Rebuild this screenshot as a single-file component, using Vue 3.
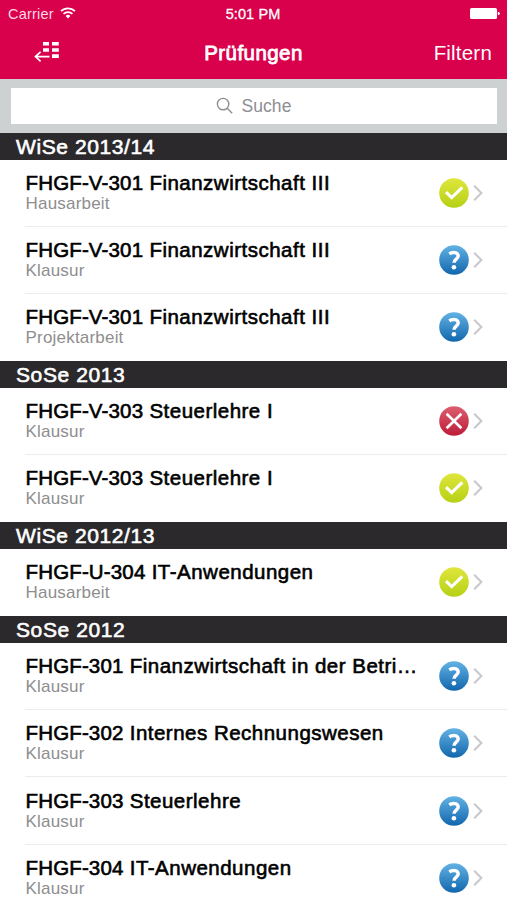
<template>
    <div class="screen">
        <header class="navbar">
            <div class="status">
                <div class="carrier">
                    <span>Carrier</span>
                    <svg class="wifi" viewBox="0 0 16 12" width="16" height="12">
                        <path d="M1 4.2a10 10 0 0 1 14 0" />
                        <path d="M3.5 6.9a6.4 6.4 0 0 1 9 0" />
                        <path class="dot" d="M5.6 9a3.5 3.5 0 0 1 4.8 0L8 11.6z" />
                    </svg>
                </div>
                <span class="time">5:01 PM</span>
                <svg class="battery" viewBox="0 0 30 12" width="30" height="12">
                    <rect x="0" y="0" width="27" height="11" rx="1.6" />
                    <path d="M27.8 3.7q2 .3 2 1.8t-2 1.8z" />
                </svg>
            </div>
            <div class="bar">
                <svg class="menu" viewBox="0 0 26 22" width="26" height="22">
                    <path class="blocks" d="M9 1h6v3.6H9zM18 1h6.8v3.6H18zM9 7.2h6v3.6H9zM18 7.2h6.8v3.6H18zM18 13.2h6.8V17H18z" />
                    <path class="arrow" d="M15.5 15.6H1.5M6.6 10.8L1.4 15.6L6.6 20.4" />
                </svg>
                <h1>Prüfungen</h1>
                <span class="filter">Filtern</span>
            </div>
        </header>

        <div class="search">
            <div class="field">
                <svg viewBox="0 0 18 18" width="18" height="18">
                    <circle cx="7.1" cy="7.1" r="5.7" />
                    <path d="M11.2 11.2L16.2 16.2" />
                </svg>
                <span>Suche</span>
            </div>
        </div>

        <section v-for="group in groups" :key="group.term">
            <h2>{{ group.term }}</h2>
            <ul>
                <li v-for="(exam, i) in group.exams" :key="i">
                    <div class="text">
                        <div class="title"><span class="code">{{ exam.code }}</span> {{ exam.name }}</div>
                        <div class="type">{{ exam.type }}</div>
                    </div>
                    <svg class="state" :class="exam.state" viewBox="0 0 32 32" width="32" height="32">
                        <defs>
                            <linearGradient :id="'fill-' + group.id + i" x1="0" y1="0" x2="0" y2="1">
                                <stop class="from" offset="0" />
                                <stop class="to" offset="1" />
                            </linearGradient>
                        </defs>
                        <circle cx="16" cy="16" r="14.8" :fill="`url(#fill-${group.id}${i})`" />
                        <path v-if="exam.state == 'passed'" class="sign check" d="M8 15.2L13.7 20.6L24.3 10.4" />
                        <path v-else-if="exam.state == 'failed'" class="sign cross" d="M8.6 8.8L23.4 23.2M23.4 8.8L8.6 23.2" />
                        <g v-else>
                            <path class="sign question" d="M11.3 9.8C14.2 7.7 20.2 7.9 20.2 12C20.2 15.2 16 15.2 16 18.8" />
                            <circle class="point" cx="15.9" cy="23.2" r="2.3" />
                        </g>
                    </svg>
                    <svg class="chevron" viewBox="0 0 10 18" width="10" height="18">
                        <path d="M1.2 1.8L8.4 9L1.2 16.2" />
                    </svg>
                </li>
            </ul>
        </section>
    </div>
</template>

<script setup>
const groups = [
    {
        id: 'w13',
        term: 'WiSe 2013/14',
        exams: [
            { code: 'FHGF-V-301', name: 'Finanzwirtschaft III', type: 'Hausarbeit', state: 'passed' },
            { code: 'FHGF-V-301', name: 'Finanzwirtschaft III', type: 'Klausur', state: 'open' },
            { code: 'FHGF-V-301', name: 'Finanzwirtschaft III', type: 'Projektarbeit', state: 'open' },
        ],
    },
    {
        id: 's13',
        term: 'SoSe 2013',
        exams: [
            { code: 'FHGF-V-303', name: 'Steuerlehre I', type: 'Klausur', state: 'failed' },
            { code: 'FHGF-V-303', name: 'Steuerlehre I', type: 'Klausur', state: 'passed' },
        ],
    },
    {
        id: 'w12',
        term: 'WiSe 2012/13',
        exams: [
            { code: 'FHGF-U-304', name: 'IT-Anwendungen', type: 'Hausarbeit', state: 'passed' },
        ],
    },
    {
        id: 's12',
        term: 'SoSe 2012',
        exams: [
            { code: 'FHGF-301', name: 'Finanzwirtschaft in der Betri…', type: 'Klausur', state: 'open' },
            { code: 'FHGF-302', name: 'Internes Rechnungswesen', type: 'Klausur', state: 'open' },
            { code: 'FHGF-303', name: 'Steuerlehre', type: 'Klausur', state: 'open' },
            { code: 'FHGF-304', name: 'IT-Anwendungen', type: 'Klausur', state: 'open' },
        ],
    },
]
</script>

<style scoped>
.screen {
    width: 507px;
    height: 900px;
    overflow: hidden;
    background: #fff;
    font-family: "Liberation Sans", Arial, sans-serif;
}

.navbar {
    height: 79px;
    background: #d9004c;
    color: #fff;
}

.status {
    display: grid;
    grid-template-columns: 1fr auto 1fr;
    align-items: center;
    height: 27px;
    padding: 0 7px 0 8px;
    font-size: 14.5px;
    line-height: 28px;
}

.carrier {
    display: flex;
    align-items: center;
    gap: 6px;
    color: #ffd9e6;
    letter-spacing: 0.2px;
}

.wifi {
    margin-top: -2px;
    fill: none;
    stroke: #fff;
    stroke-width: 1.7;
}

.wifi .dot {
    fill: #fff;
    stroke: none;
}

.time {
    padding-right: 2px;
    letter-spacing: 0.1px;
    -webkit-text-stroke: 0.3px #fff;
}

.battery {
    justify-self: end;
    fill: #fff;
}

.bar {
    display: grid;
    grid-template-columns: 1fr auto 1fr;
    align-items: center;
    height: 52px;
    padding: 0 15px 0 34px;
}

.bar h1 {
    margin: 0 19px 0 0;
    font-size: 20.5px;
    font-weight: 400;
    line-height: 50px;
    letter-spacing: 0.45px;
    -webkit-text-stroke: 0.8px #fff;
}

.menu {
    margin-top: -3px;
}

.blocks {
    fill: #fff;
}

.arrow {
    fill: none;
    stroke: #fff;
    stroke-width: 1.6;
}

.filter {
    justify-self: end;
    font-size: 20.5px;
    line-height: 50px;
    letter-spacing: 0.2px;
}

.search {
    box-sizing: border-box;
    height: 53.8px;
    padding: 9px 10px 0 11px;
    background: #cdd1d2;
}

.field {
    display: flex;
    align-items: center;
    justify-content: center;
    gap: 8px;
    height: 36px;
    padding-right: 1px;
    background: #fff;
    color: #8e8e93;
    font-size: 17.5px;
    letter-spacing: 0.05px;
}

.field svg {
    fill: none;
    stroke: #8e8e93;
    stroke-width: 1.4;
}

h2 {
    height: 26.8px;
    margin: 0;
    padding-left: 16px;
    background: #2b292c;
    color: #fff;
    font-size: 21px;
    font-weight: 400;
    line-height: 28px;
    letter-spacing: 0.6px;
    -webkit-text-stroke: 0.6px #fff;
}

ul {
    margin: 0;
    padding: 0;
    list-style: none;
}

li {
    display: flex;
    align-items: center;
    box-sizing: border-box;
    height: 67.2px;
    margin-left: 25px;
    padding-right: 24px;
    border-bottom: 1.5px solid #ececec;
}

li:last-child {
    border-bottom-color: transparent;
}

.text {
    flex: 1;
    min-width: 0;
    padding-left: 0.5px;
    white-space: nowrap;
}

.title {
    color: #000;
    font-size: 20.5px;
    line-height: 22px;
    letter-spacing: 0.49px;
    -webkit-text-stroke: 0.6px #000;
}

.code {
    letter-spacing: 0.15px;
}

.type {
    color: #8e8e8e;
    font-size: 17px;
    line-height: 20px;
    letter-spacing: 0.2px;
}

.state {
    flex: none;
}

.passed .from {
    stop-color: #dfe63c;
}

.passed .to {
    stop-color: #b6d015;
}

.failed .from {
    stop-color: #dc5f70;
}

.failed .to {
    stop-color: #bd1c39;
}

.open .from {
    stop-color: #62b2e4;
}

.open .to {
    stop-color: #1266ad;
}

.sign {
    fill: none;
    stroke: #fff;
}

.check {
    stroke-width: 3.2;
}

.cross {
    stroke-width: 2.6;
}

.question {
    stroke-width: 3.4;
}

.point {
    fill: #fff;
}

.chevron {
    flex: none;
    margin-left: 3px;
    fill: none;
    stroke: #c7c7cc;
    stroke-width: 2;
}
</style>

<style>
body {
    margin: 0;
    overflow: hidden;
}
</style>
